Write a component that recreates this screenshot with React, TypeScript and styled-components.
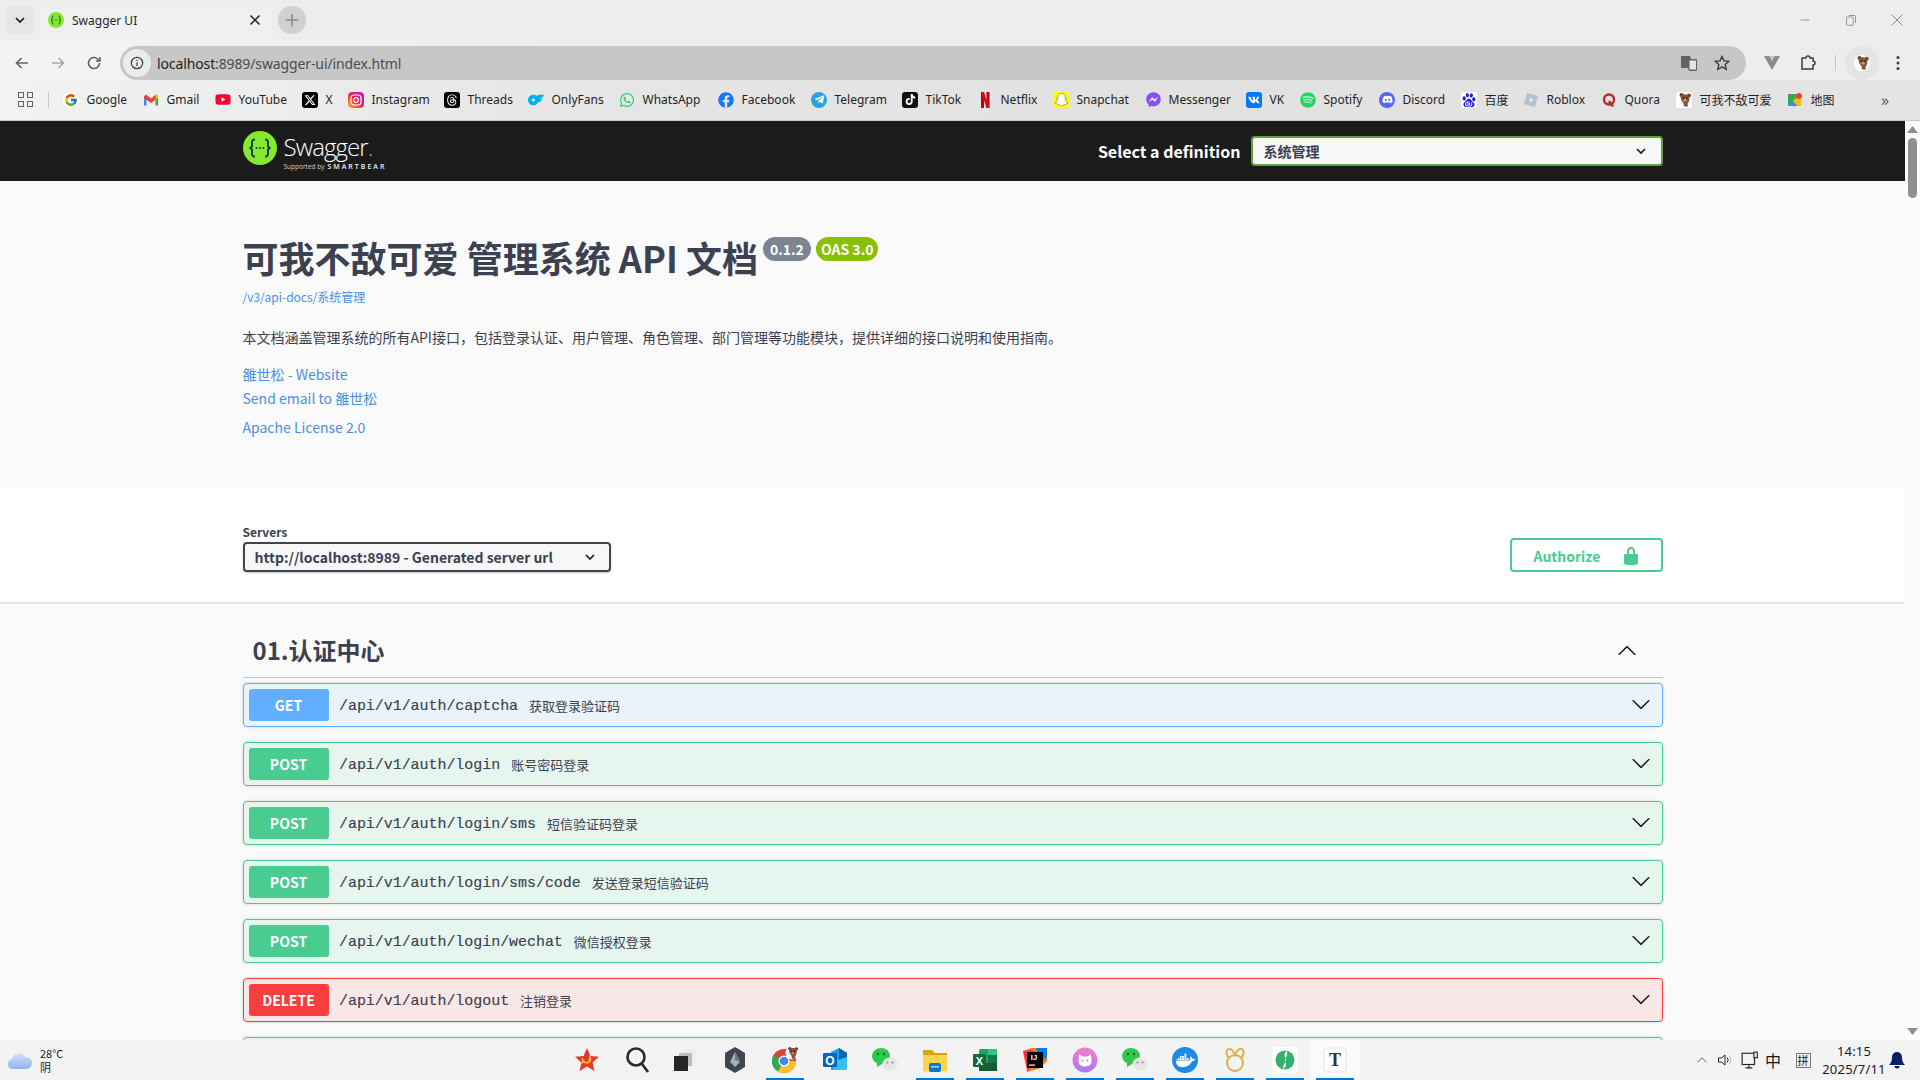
import React from 'react';
import styled, { createGlobalStyle } from 'styled-components';
import { FcGoogle } from 'react-icons/fc';
import {
  FaDiscord,
  FaDocker,
  FaFacebook,
  FaFacebookMessenger,
  FaSnapchatGhost,
  FaSpotify,
  FaTelegramPlane,
  FaTiktok,
  FaVk,
  FaWhatsapp,
  FaYoutube,
} from 'react-icons/fa';
import { FaThreads, FaXTwitter } from 'react-icons/fa6';
import { SiBaidu, SiOnlyfans } from 'react-icons/si';

const UI_FONT = `"Noto Sans", "Noto Sans CJK SC", sans-serif`;
const DOC_FONT = `"Noto Sans CJK SC", "Noto Sans", sans-serif`;

const GlobalStyle = createGlobalStyle`
  html, body {
    margin: 0;
    padding: 0;
    overflow: hidden;
    background: #fafafa;
  }
  * { box-sizing: border-box; }
`;

const Windowed = styled.div`
  width: 1920px;
  height: 1080px;
  display: flex;
  flex-direction: column;
  overflow: hidden;
  font-family: ${DOC_FONT};
  color: #3b4151;
`;

/* browser chrome */
const TabStrip = styled.div`
  height: 40px;
  flex: none;
  display: flex;
  align-items: center;
  padding-left: 6px;
  background: #ededed;
`;

const TabMenu = styled.div`
  width: 28px;
  height: 28px;
  border-radius: 8px;
  background: #e6e6e6;
  display: flex;
  align-items: center;
  justify-content: center;
`;

const Tab = styled.div`
  width: 232px;
  height: 34px;
  margin-top: 6px;
  margin-left: 6px;
  padding: 0 11px 6px 8px;
  border-radius: 10px 10px 0 0;
  background: #f0f0f0;
  display: flex;
  align-items: center;
  font: 12px ${UI_FONT};
  color: #262626;
`;

const TabTitle = styled.span`
  margin-left: 8px;
  flex: 1;
`;

const NewTab = styled.div`
  width: 28px;
  height: 28px;
  margin-left: 6px;
  border-radius: 50%;
  background: #d0d0d0;
  display: flex;
  align-items: center;
  justify-content: center;
`;

const WindowControls = styled.div`
  margin-left: auto;
  display: flex;
  align-items: center;
`;

const WindowButton = styled.div`
  width: 46px;
  height: 40px;
  display: flex;
  align-items: center;
  justify-content: center;
`;

const Toolbar = styled.div`
  height: 40px;
  flex: none;
  padding-top: 6px;
  display: flex;
  align-items: flex-start;
  background: linear-gradient(90deg, #f4f4f4 0%, #ececec 35%, #ededed 100%);
`;

const NavButton = styled.div`
  width: 36px;
  height: 34px;
  flex: none;
  display: flex;
  align-items: center;
  justify-content: center;
`;

const NavGroup = styled.div`
  width: 120px;
  flex: none;
  padding-left: 4px;
  display: flex;
`;

const UrlPill = styled.div`
  width: 1626px;
  height: 34px;
  flex: none;
  border-radius: 17px;
  background: #c7c7c7;
  display: flex;
  align-items: center;
  padding: 0 8px 0 3px;
`;

const SiteInfo = styled.div`
  width: 28px;
  height: 28px;
  border-radius: 50%;
  background: #ececec;
  display: flex;
  align-items: center;
  justify-content: center;
`;

const UrlText = styled.div`
  margin-left: 6px;
  flex: 1;
  font: 14px ${UI_FONT};
  letter-spacing: -0.12px;
  color: #4c4c4c;
`;

const UrlHost = styled.span`
  color: #1f1f1f;
`;

const PillAction = styled.div`
  width: 33px;
  display: flex;
  justify-content: center;
`;

const ToolActions = styled.div`
  display: flex;
  align-items: center;
  height: 34px;
  margin-left: 8px;
`;

const ToolAction = styled.div<{ $w: number }>`
  width: ${p => p.$w}px;
  display: flex;
  justify-content: center;
  align-items: center;
`;

const ToolSeparator = styled.div`
  width: 1px;
  height: 16px;
  background: #c4c4c4;
`;

const Avatar = styled.div`
  width: 34px;
  height: 34px;
  border-radius: 50%;
  background: #e4e4e4;
  display: flex;
  align-items: center;
  justify-content: center;
`;

const BookmarkBar = styled.div`
  height: 41px;
  flex: none;
  display: flex;
  align-items: center;
  padding-left: 64px;
  padding-bottom: 1px;
  border-bottom: 1px solid #c9c9c9;
  background: linear-gradient(90deg, #f2f2f2 0%, #e6e6e6 30%, #e1e1e1 60%, #e4e4e4 100%);
`;

const AppsButton = styled.div`
  width: 16px;
  height: 16px;
  margin-left: -46px;
  margin-right: 14px;
  flex: none;
  display: grid;
  grid-template-columns: 6px 6px;
  grid-template-rows: 6px 6px;
  gap: 3px;
`;

const AppsCell = styled.span`
  border: 1.5px solid #5f6368;
`;

const BarSeparator = styled.div`
  width: 1px;
  height: 16px;
  margin-right: 14px;
  flex: none;
  background: #c6c6c6;
`;

const Bookmark = styled.div<{ $w: number }>`
  width: ${p => p.$w}px;
  flex: none;
  display: flex;
  align-items: center;
  gap: 7.5px;
  font: 12px ${UI_FONT};
  color: #1f1f1f;
  white-space: nowrap;
`;

const Favicon = styled.span<{ $bg?: string; $fg?: string; $round?: boolean }>`
  width: 16px;
  height: 16px;
  flex: none;
  display: flex;
  align-items: center;
  justify-content: center;
  background: ${p => p.$bg || 'transparent'};
  color: ${p => p.$fg || '#fff'};
  border-radius: ${p => (p.$round ? '50%' : '3px')};
  overflow: hidden;
`;

const MoreBookmarks = styled.span`
  margin-left: 54px;
  font: 16px ${UI_FONT};
  color: #5f6368;
`;

/* swagger page */
const Viewport = styled.div`
  flex: 1;
  min-height: 0;
  display: flex;
`;

const Page = styled.div`
  flex: 1;
  min-width: 0;
  overflow: hidden;
  background: #fafafa;
`;

const Wrapper = styled.div`
  max-width: 1460px;
  margin: 0 auto;
  padding: 0 20px;
`;

const Topbar = styled.div`
  height: 60px;
  background: #1b1b1b;
`;

const TopbarInner = styled(Wrapper)`
  height: 60px;
  display: flex;
  align-items: center;
  justify-content: space-between;
`;

const Logo = styled.div`
  height: 60px;
  padding-top: 10px;
  display: flex;
  align-items: flex-start;
  gap: 7px;
  color: #fff;
`;

const LogoText = styled.div`
  margin-top: 3px;
  display: flex;
  flex-direction: column;
  font-family: "Open Sans", sans-serif;
`;

const LogoName = styled.div`
  font-size: 24px;
  font-weight: 300;
  line-height: 26px;
  letter-spacing: -0.9px;
`;

const LogoDot = styled.span`
  color: #9a9a9a;
`;

const LogoSub = styled.div`
  margin-top: 2px;
  font-size: 6.5px;
  line-height: 10px;
  white-space: nowrap;
  color: #cfcfcf;
`;

const LogoBrand = styled.span`
  margin-left: 3px;
  font-size: 7px;
  font-weight: 600;
  letter-spacing: 2px;
  color: #f2f2f2;
`;

const DefinitionForm = styled.div`
  display: flex;
  align-items: center;
  gap: 10px;
`;

const DefinitionLabel = styled.span`
  font-size: 16px;
  font-weight: 700;
  color: #fff;
`;

const DefinitionSelect = styled.div`
  width: 412px;
  height: 30px;
  padding: 0 15px 0 11px;
  border: 2px solid #62a03f;
  border-radius: 4px;
  background: #f7f7f7;
  display: flex;
  align-items: center;
  justify-content: space-between;
  font-size: 14px;
  font-weight: 700;
  color: #3b4151;
`;

const Info = styled(Wrapper)`
  padding-top: 50px;
  padding-bottom: 51px;
`;

const TitleRow = styled.div`
  display: flex;
  align-items: flex-start;
  height: 54px;
`;

const Title = styled.h2`
  margin: 0;
  font-size: 36px;
  line-height: 53px;
  font-weight: 700;
  color: #3b4151;
`;

const Badge = styled.span<{ $bg: string; $pad: number }>`
  height: 24px;
  margin-top: 6px;
  margin-left: 5px;
  padding: 0 ${p => p.$pad}px;
  border-radius: 12px;
  background: ${p => p.$bg};
  color: #fff;
  font-size: 14px;
  font-weight: 700;
  line-height: 24px;
`;

const DocUrl = styled.div`
  margin-top: 4px;
  font-size: 12px;
  line-height: 16px;
  color: #4990e2;
`;

const Description = styled.p`
  margin: 22px 0 0;
  font-size: 14px;
  line-height: 20px;
  color: #3b4151;
`;

const InfoLink = styled.div<{ $gap: number }>`
  margin-top: ${p => p.$gap}px;
  font-size: 14px;
  line-height: 20px;
  color: #4990e2;
`;

const SchemeBar = styled.div`
  height: 114px;
  background: #fff;
  box-shadow: 0 1px 2px 0 rgba(0, 0, 0, 0.15);
`;

const SchemeInner = styled(Wrapper)`
  height: 114px;
  padding-bottom: 30px;
  display: flex;
  align-items: flex-end;
  justify-content: space-between;
`;

const ServerLabel = styled.div`
  font-size: 12px;
  font-weight: 700;
  line-height: 16px;
  margin-bottom: 2px;
`;

const ServerSelect = styled.div`
  width: 368px;
  height: 30px;
  padding: 0 14px 0 10px;
  border: 2px solid #41444e;
  border-radius: 4px;
  background: #f7f7f7;
  box-shadow: 0 1px 2px 0 rgba(0, 0, 0, 0.25);
  display: flex;
  align-items: center;
  justify-content: space-between;
  font-size: 14px;
  font-weight: 700;
`;

const AuthorizeButton = styled.div`
  width: 153px;
  height: 34px;
  padding-left: 22px;
  padding-top: 1px;
  border: 2px solid #49cc90;
  border-radius: 4px;
  display: flex;
  align-items: center;
  gap: 21px;
  font-size: 14px;
  font-weight: 700;
  color: #49cc90;
`;

const Tag = styled(Wrapper)`
  padding-top: 25px;
`;

const TagHeader = styled.div`
  height: 51px;
  padding: 0 26px 2px 10px;
  margin-bottom: 5px;
  border-bottom: 1px solid rgba(59, 65, 81, 0.3);
  display: flex;
  align-items: center;
  justify-content: space-between;
`;

const TagTitle = styled.h3`
  margin: -2px 0 0;
  font-size: 24px;
  line-height: 46px;
  font-weight: 700;
  color: #3b4151;
`;

const METHOD_COLORS: Record<string, { main: string; tint: string }> = {
  GET: { main: '#61affe', tint: 'rgba(97, 175, 254, 0.1)' },
  POST: { main: '#49cc90', tint: 'rgba(73, 204, 144, 0.1)' },
  DELETE: { main: '#f93e3e', tint: 'rgba(249, 62, 62, 0.1)' },
};

const Operation = styled.div<{ $method: string }>`
  height: 44px;
  margin-bottom: 15px;
  padding: 5px 11px 5px 5px;
  border: 1px solid ${p => METHOD_COLORS[p.$method].main};
  border-radius: 4px;
  background: ${p => METHOD_COLORS[p.$method].tint};
  box-shadow: 0 0 3px rgba(0, 0, 0, 0.19);
  display: flex;
  align-items: center;
`;

const MethodBadge = styled.span<{ $method: string }>`
  width: 80px;
  height: 32px;
  flex: none;
  border-radius: 3px;
  background: ${p => METHOD_COLORS[p.$method].main};
  color: #fff;
  font-size: 14px;
  font-weight: 700;
  line-height: 32px;
  text-align: center;
`;

const OperationPath = styled.span`
  margin-left: 10.5px;
  padding-top: 2px;
  font-family: "Liberation Mono", monospace;
  font-size: 15px;
  letter-spacing: -0.05px;
  color: #3b4151;
  -webkit-text-stroke: 0.15px #3b4151;
`;

const OperationSummary = styled.span`
  margin-left: 11px;
  flex: 1;
  font-size: 13px;
  color: #3b4151;
`;

const RowChevron = styled.span`
  height: 20px;
  margin-top: -2px;
`;

const ScrollTrack = styled.div`
  width: 15px;
  flex: none;
  display: flex;
  flex-direction: column;
  align-items: center;
  background: #fbfbfb;
`;

const ScrollArrow = styled.div`
  height: 17px;
  flex: none;
  display: flex;
  align-items: center;
  justify-content: center;
`;

const ScrollThumb = styled.div`
  width: 9px;
  height: 60px;
  border-radius: 5px;
  background: #8f8f8f;
`;

const ScrollSpacer = styled.div`
  flex: 1;
`;

/* taskbar */
const Taskbar = styled.div`
  height: 40px;
  flex: none;
  display: grid;
  grid-template-columns: 560px 1fr auto;
  background: #f3f3f3;
  font-family: ${UI_FONT};
  color: #1a1a1a;
`;

const Weather = styled.div`
  display: flex;
  align-items: center;
  padding-left: 7px;
  gap: 7px;
`;

const WeatherText = styled.div`
  font: 11px/14px ${DOC_FONT};
`;

const TaskIcons = styled.div`
  display: flex;
`;

const TaskItem = styled.div<{ $running?: boolean; $active?: boolean; $dx?: number }>`
  position: relative;
  width: 50px;
  height: 40px;
  padding-left: ${p => p.$dx || 0}px;
  display: flex;
  align-items: center;
  justify-content: center;
  background: ${p => (p.$active ? '#fbfbfb' : 'transparent')};
  border-radius: 4px;

  &::after {
    content: '';
    display: ${p => (p.$running ? 'block' : 'none')};
    position: absolute;
    left: 6px;
    right: 6px;
    bottom: 0;
    height: 2px;
    background: #0078d4;
  }
`;

const TaskBadge = styled.span<{ $bg: string }>`
  width: 26px;
  height: 26px;
  border-radius: 50%;
  background: ${p => p.$bg};
  display: flex;
  align-items: center;
  justify-content: center;
`;

const Tray = styled.div`
  display: flex;
  align-items: center;
  padding-right: 15px;
`;

const TrayIcon = styled.div<{ $w: number }>`
  width: ${p => p.$w}px;
  display: flex;
  justify-content: center;
  align-items: center;
`;

const ImeText = styled.span`
  font: 16px ${DOC_FONT};
`;

const ImeBox = styled.span`
  width: 15px;
  height: 15px;
  border: 1px solid #777;
  display: flex;
  align-items: center;
  justify-content: center;
  font: 11px ${DOC_FONT};
`;

const Clock = styled.div`
  width: 70px;
  text-align: center;
  font-size: 13px;
  line-height: 18px;
  letter-spacing: 0.2px;
  white-space: nowrap;
`;

/* drawings */
const Chevron = ({ up = false }: { up?: boolean }) => (
  <svg width="20" height="20" viewBox="0 0 20 20" fill="#1a1a1a" style={up ? { transform: 'rotate(180deg)' } : undefined}>
    <path d="M17.418 6.109c.272-.268.709-.268.979 0s.271.701 0 .969l-7.908 7.83c-.27.268-.707.268-.979 0l-7.908-7.83c-.27-.268-.27-.701 0-.969.271-.268.709-.268.979 0L10 13.25l7.418-7.141z" />
  </svg>
);

const SmallChevron = ({ color = '#1a1a1a' }: { color?: string }) => (
  <svg width="10" height="6" viewBox="0 0 10 6" fill="none" stroke={color} strokeWidth="1.7">
    <path d="M1 1l4 4 4-4" />
  </svg>
);

const SwaggerMark = ({ size }: { size: number }) => (
  <svg width={size} height={size} viewBox="0 0 34 34">
    <circle cx="17" cy="17" r="17" fill="#85ea2d" />
    <g fill="none" stroke="#173647" strokeWidth="1.9">
      <path d="M12 8.5c-3 0-3 1.5-3 4v2c0 1.6-1 2.5-2.5 2.5 1.5 0 2.5.9 2.5 2.5v2c0 2.5 0 4 3 4" />
      <path d="M22 8.5c3 0 3 1.5 3 4v2c0 1.6 1 2.5 2.5 2.5-1.5 0-2.5.9-2.5 2.5v2c0 2.5 0 4-3 4" />
    </g>
    <g fill="#173647">
      <circle cx="13.5" cy="17" r="1" />
      <circle cx="17" cy="17" r="1" />
      <circle cx="20.5" cy="17" r="1" />
    </g>
  </svg>
);

const LockIcon = () => (
  <svg width="20" height="20" viewBox="0 0 20 20" fill="#49cc90">
    <path d="M15.8 8H14V5.6C14 2.703 12.665 1 10 1 7.334 1 6 2.703 6 5.6V8H4c-.553 0-1 .646-1 1.199V17c0 .549.428 1.139.951 1.307l1.197.387C5.672 18.861 6.55 19 7.1 19h5.8c.549 0 1.428-.139 1.951-.307l1.196-.387c.524-.167.953-.757.953-1.306V9.199C17 8.646 16.352 8 15.8 8zM12 8H8V5.199C8 3.754 8.797 3 10 3c1.203 0 2 .754 2 2.199V8z" />
  </svg>
);

const Stroke = ({ children, size = 16, color = '#5f6368', width = 1.6 }: { children: React.ReactNode; size?: number; color?: string; width?: number }) => (
  <svg width={size} height={size} viewBox="0 0 16 16" fill="none" stroke={color} strokeWidth={width}>
    {children}
  </svg>
);

const BearFace = ({ size }: { size: number }) => (
  <svg width={size} height={size} viewBox="0 0 16 16">
    <circle cx="5.5" cy="3" r="2" fill="#6d4230" />
    <circle cx="13" cy="3.5" r="2" fill="#6d4230" />
    <path d="M5 4c2-2.5 7-2 8 .5 1 3 0 6-1.5 7l.5 3H8l-.5-3.5C6 10 4 6.5 5 4z" fill="#87533a" />
    <circle cx="7.5" cy="6" r=".8" fill="#1c1008" />
    <circle cx="11" cy="6" r=".8" fill="#1c1008" />
    <ellipse cx="9" cy="8.2" rx="1.7" ry="1.2" fill="#c89a78" />
  </svg>
);

const Gmail = () => (
  <svg width="16" height="16" viewBox="0 0 16 16">
    <path d="M1 3.5v10h2.5V7.5z" fill="#4285f4" />
    <path d="M15 3.5v10h-2.5V7.5z" fill="#34a853" />
    <path d="M1 4.5L3 2.5 8 6.5l5-4 2 2V6L8 11 1 6z" fill="#ea4335" />
    <path d="M12.5 2.8L15 2.5V6l-2.5 1.8z" fill="#fbbc04" />
  </svg>
);

const Instagram = () => (
  <svg width="16" height="16" viewBox="0 0 16 16">
    <defs>
      <linearGradient id="ig" x1="0" y1="1" x2="1" y2="0">
        <stop offset="0" stopColor="#fdb42c" />
        <stop offset=".5" stopColor="#f0204f" />
        <stop offset="1" stopColor="#a326d0" />
      </linearGradient>
    </defs>
    <rect width="16" height="16" rx="4" fill="url(#ig)" />
    <rect x="3" y="3" width="10" height="10" rx="3" fill="none" stroke="#fff" strokeWidth="1.2" />
    <circle cx="8" cy="8" r="2.3" fill="none" stroke="#fff" strokeWidth="1.2" />
  </svg>
);

const Netflix = () => (
  <svg width="12" height="16" viewBox="0 0 12 16">
    <path d="M2 0h3v16H2z" fill="#b1060f" />
    <path d="M7.5 0h3v16h-3z" fill="#b1060f" />
    <path d="M2 0h3l5.5 16h-3z" fill="#e50914" />
  </svg>
);

const Roblox = () => (
  <svg width="16" height="16" viewBox="0 0 16 16">
    <path d="M4 1l11 3-3 11L1 12z" fill="#b7c2cc" />
    <path d="M7 6l3 1-1 3-3-1z" fill="#e4e9ee" />
  </svg>
);

const Quora = () => (
  <svg width="16" height="16" viewBox="0 0 16 16" fill="none" stroke="#b92b27" strokeWidth="2.4">
    <circle cx="8" cy="7.5" r="5" />
    <path d="M8 9l4 5.5" />
  </svg>
);

const MapPin = () => (
  <svg width="16" height="16" viewBox="0 0 16 16">
    <path d="M1 2h9v6l-9 6z" fill="#34a853" />
    <path d="M1 14l5-5 5 5z" fill="#4285f4" />
    <path d="M6 9l5-5 3 3v7h-3z" fill="#fbbc04" />
    <circle cx="12" cy="4" r="3" fill="#ea4335" />
  </svg>
);

const WechatIcon = () => (
  <svg width="28" height="26" viewBox="0 0 28 26">
    <ellipse cx="10" cy="9" rx="9" ry="8" fill="#2dc84d" />
    <path d="M6 15l0 5 5-3z" fill="#2dc84d" />
    <circle cx="7" cy="7" r="1.2" fill="#14692a" />
    <circle cx="13" cy="7" r="1.2" fill="#14692a" />
    <ellipse cx="19" cy="17" rx="7.5" ry="6.5" fill="#e6e6e6" />
    <circle cx="16.5" cy="15.5" r="1" fill="#888" />
    <circle cx="21.5" cy="15.5" r="1" fill="#888" />
  </svg>
);

const TASK_ICONS: { key: string; running?: boolean; active?: boolean; dx?: number; icon: React.ReactNode }[] = [
  {
    key: 'star',
    dx: 4,
    icon: (
      <svg width="26" height="26" viewBox="0 0 26 26">
        <path d="M13 1l3.5 8 8.5.8-6.4 5.7 1.900 8.500L13 19.500 5.500 24l1.900-8.500L1 9.800 9.500 9z" fill="#e8392e" />
        <path d="M15 8c3 2 3 6 0 8-2 1.200-4 .6-5.500-.5L8 17l-1-1 1.500-1.500c-1-1.500-1-3 0-4 .3 2 2 4 4 4.500 1.800.2 3-2.500 2.500-7z" fill="#f7c32e" />
      </svg>
    ),
  },
  {
    key: 'search',
    dx: 6,
    icon: (
      <svg width="26" height="28" viewBox="0 0 26 28" fill="none" stroke="#2a2a2a" strokeWidth="2.6">
        <circle cx="11" cy="11" r="8.5" />
        <path d="M17 18l6 8" />
      </svg>
    ),
  },
  {
    key: 'files',
    icon: (
      <svg width="24" height="24" viewBox="0 0 24 24">
        <rect x="9" y="1" width="14" height="14" fill="#ececec" />
        <rect x="6" y="5" width="13" height="13" fill="#bcbcbc" />
        <rect x="1" y="8" width="14" height="15" fill="#262626" />
      </svg>
    ),
  },
  {
    key: 'hex',
    icon: (
      <svg width="24" height="28" viewBox="0 0 24 28">
        <path d="M12 1l10 6v14l-10 6-10-6V7z" fill="#3f4650" />
        <path d="M12 6l5 10-5 5-5-5z" fill="#a9afb6" />
        <path d="M12 6l5 10-5-2z" fill="#6f767e" />
      </svg>
    ),
  },
  {
    key: 'chrome',
    running: true,
    icon: (
      <svg width="28" height="28" viewBox="0 0 28 28">
        <circle cx="13" cy="15" r="12" fill="#e34133" />
        <path d="M13 15L2.6 9A12 12 0 0 0 7 25.4z" fill="#2fa84f" />
        <path d="M13 15h12a12 12 0 0 1-18 10.4z" fill="#fbc02d" />
        <circle cx="13" cy="15" r="5.5" fill="#fff" />
        <circle cx="13" cy="15" r="4.3" fill="#4285f4" />
        <circle cx="21" cy="7" r="6.5" fill="#fff" />
        <g transform="translate(14 0)"><BearFace size={14} /></g>
      </svg>
    ),
  },
  {
    key: 'outlook',
    icon: (
      <svg width="26" height="26" viewBox="0 0 26 26">
        <path d="M9 5l8-4 8 5v14a3 3 0 0 1-3 3H9z" fill="#1aa1e8" />
        <path d="M17 1l8 5v5l-8 4z" fill="#0f64b8" />
        <path d="M13 14l12-4v10a3 3 0 0 1-3 3H11z" fill="#33c3f2" />
        <rect x="1" y="6" width="14" height="14" rx="1" fill="#0a64c4" />
        <text x="8" y="17.5" fontFamily="Liberation Sans, sans-serif" fontWeight="700" fontSize="12" fill="#fff" textAnchor="middle">O</text>
      </svg>
    ),
  },
  { key: 'wechat', icon: <WechatIcon /> },
  {
    key: 'folder',
    running: true,
    icon: (
      <svg width="26" height="24" viewBox="0 0 26 24">
        <path d="M1 2h9l3 3h12v4H1z" fill="#d9a313" />
        <path d="M1 7h24v15a1.5 1.5 0 0 1-1.5 1.5h-21A1.5 1.5 0 0 1 1 22z" fill="#fcd34d" />
        <rect x="7" y="15" width="12" height="9" rx="2" fill="#0a78c8" />
        <rect x="9" y="18" width="8" height="1.5" fill="#9fd6f5" />
      </svg>
    ),
  },
  {
    key: 'excel',
    running: true,
    icon: (
      <svg width="26" height="24" viewBox="0 0 26 24">
        <rect x="7" y="1" width="18" height="22" rx="1.5" fill="#21a366" />
        <rect x="16" y="1" width="9" height="6" fill="#33c481" />
        <rect x="16" y="7" width="9" height="8" fill="#107c41" />
        <rect x="7" y="15" width="18" height="8" fill="#185c37" />
        <rect x="1" y="6" width="13" height="13" rx="1" fill="#0e6b38" />
        <text x="7.5" y="16.5" fontFamily="Liberation Sans, sans-serif" fontWeight="700" fontSize="11" fill="#fff" textAnchor="middle">X</text>
      </svg>
    ),
  },
  {
    key: 'idea',
    running: true,
    icon: (
      <svg width="26" height="26" viewBox="0 0 26 26">
        <path d="M1 4l8-3 16 0v13l-6 7-14 4z" fill="#fc801d" />
        <path d="M1 4l10-1-5 22z" fill="#fe2857" />
        <path d="M14 1h11v9l-8 6z" fill="#087cfa" />
        <rect x="5" y="5" width="16" height="16" fill="#000" />
        <text x="12" y="13" fontFamily="Liberation Sans, sans-serif" fontWeight="700" fontSize="7.5" fill="#fff" textAnchor="middle">IJ</text>
        <rect x="7" y="17.5" width="6" height="1.2" fill="#fff" />
      </svg>
    ),
  },
  {
    key: 'cat',
    running: true,
    icon: (
      <svg width="26" height="26" viewBox="0 0 26 26">
        <defs>
          <linearGradient id="cat" x1="0" y1="0" x2="0" y2="1">
            <stop offset="0" stopColor="#f77fc6" />
            <stop offset="1" stopColor="#a678f5" />
          </linearGradient>
        </defs>
        <circle cx="13" cy="13" r="12.5" fill="url(#cat)" />
        <path d="M7 7l3.5 2.5h5L19 7l.5 8c-.5 3-3.5 4.5-6.5 4.5S7 18 6.5 15z" fill="#fff" />
        <circle cx="10.5" cy="13.5" r="1" fill="#b488e8" />
        <circle cx="15.5" cy="13.5" r="1" fill="#b488e8" />
      </svg>
    ),
  },
  { key: 'wechat2', running: true, icon: <WechatIcon /> },
  {
    key: 'docker',
    running: true,
    icon: (
      <TaskBadge $bg="#1d8ae5">
        <FaDocker size={19} color="#fff" />
      </TaskBadge>
    ),
  },
  {
    key: 'navicat',
    running: true,
    icon: (
      <svg width="26" height="26" viewBox="0 0 26 26" fill="none" stroke="#d9b44a" strokeWidth="2">
        <ellipse cx="13" cy="16" rx="8" ry="8" />
        <path d="M7 11C3 7 4 1 8 2c3 .6 4 4 5 6 1-2 2-5.4 5-6 4-1 5 5 1 9" />
      </svg>
    ),
  },
  {
    key: 'green',
    running: true,
    icon: (
      <svg width="26" height="26" viewBox="0 0 26 26">
        <rect width="26" height="26" rx="5" fill="#fff" />
        <circle cx="13" cy="13" r="9.5" fill="#31b26b" />
        <path d="M15 4c-5 3-1 7-1 9s-3 4-3 9c5-3 2-7 2-9s3-4 2-9z" fill="#fff" />
      </svg>
    ),
  },
  {
    key: 'typora',
    running: true,
    active: true,
    icon: (
      <svg width="24" height="26" viewBox="0 0 24 26">
        <rect x="1" y="1" width="22" height="24" rx="3" fill="#fff" stroke="#e4e4e4" />
        <text x="12" y="19" fontFamily="Liberation Serif, serif" fontWeight="700" fontSize="18" fill="#333" textAnchor="middle">T</text>
      </svg>
    ),
  },
];

const BOOKMARKS: { label: string; w: number; icon: React.ReactNode }[] = [
  { label: 'Google', w: 80, icon: <Favicon $bg="#fff" $round><FcGoogle size={14} /></Favicon> },
  { label: 'Gmail', w: 72, icon: <Favicon><Gmail /></Favicon> },
  { label: 'YouTube', w: 87, icon: <Favicon $fg="#ff0033"><FaYoutube size={17} /></Favicon> },
  { label: 'X', w: 46, icon: <Favicon $bg="#000"><FaXTwitter size={12} /></Favicon> },
  { label: 'Instagram', w: 96, icon: <Favicon><Instagram /></Favicon> },
  { label: 'Threads', w: 84, icon: <Favicon $bg="#000"><FaThreads size={12} /></Favicon> },
  { label: 'OnlyFans', w: 91, icon: <Favicon $fg="#00aff0"><SiOnlyfans size={16} /></Favicon> },
  { label: 'WhatsApp', w: 99, icon: <Favicon $fg="#25d366"><FaWhatsapp size={16} /></Favicon> },
  { label: 'Facebook', w: 93, icon: <Favicon $fg="#1877f2"><FaFacebook size={16} /></Favicon> },
  { label: 'Telegram', w: 91, icon: <Favicon $bg="#2aa3df" $round><FaTelegramPlane size={11} /></Favicon> },
  { label: 'TikTok', w: 75, icon: <Favicon $bg="#111"><FaTiktok size={11} /></Favicon> },
  { label: 'Netflix', w: 76, icon: <Favicon><Netflix /></Favicon> },
  { label: 'Snapchat', w: 92, icon: <Favicon $bg="#fffc00" $fg="#fff"><FaSnapchatGhost size={13} style={{ stroke: '#222', strokeWidth: 14 }} /></Favicon> },
  { label: 'Messenger', w: 101, icon: <Favicon $fg="#8a4ff5"><FaFacebookMessenger size={15} /></Favicon> },
  { label: 'VK', w: 54, icon: <Favicon $bg="#0077ff"><FaVk size={12} /></Favicon> },
  { label: 'Spotify', w: 79, icon: <Favicon $fg="#1ed760"><FaSpotify size={16} /></Favicon> },
  { label: 'Discord', w: 82, icon: <Favicon $bg="#5865f2" $round><FaDiscord size={11} /></Favicon> },
  { label: '百度', w: 62, icon: <Favicon $bg="#fff" $fg="#2319dc"><SiBaidu size={14} /></Favicon> },
  { label: 'Roblox', w: 78, icon: <Favicon><Roblox /></Favicon> },
  { label: 'Quora', w: 75, icon: <Favicon><Quora /></Favicon> },
  { label: '可我不敌可爱', w: 111, icon: <Favicon $bg="#fff"><BearFace size={16} /></Favicon> },
  { label: '地图', w: 40, icon: <Favicon><MapPin /></Favicon> },
];

const OPERATIONS = [
  { method: 'GET', path: '/api/v1/auth/captcha', summary: '获取登录验证码' },
  { method: 'POST', path: '/api/v1/auth/login', summary: '账号密码登录' },
  { method: 'POST', path: '/api/v1/auth/login/sms', summary: '短信验证码登录' },
  { method: 'POST', path: '/api/v1/auth/login/sms/code', summary: '发送登录短信验证码' },
  { method: 'POST', path: '/api/v1/auth/login/wechat', summary: '微信授权登录' },
  { method: 'DELETE', path: '/api/v1/auth/logout', summary: '注销登录' },
];

const App = () => {
  return (
    <Windowed>
      <GlobalStyle />
      <TabStrip>
        <TabMenu><SmallChevron /></TabMenu>
        <Tab>
          <SwaggerMark size={16} />
          <TabTitle>Swagger UI</TabTitle>
          <Stroke size={12} color="#1f1f1f" width={2}><path d="M2 2l12 12M14 2L2 14" /></Stroke>
        </Tab>
        <NewTab>
          <Stroke size={14} color="#8a8a8a" width={1.8}><path d="M8 1v14M1 8h14" /></Stroke>
        </NewTab>
        <WindowControls>
          <WindowButton><Stroke size={12} color="#777" width={1}><path d="M2 8h12" /></Stroke></WindowButton>
          <WindowButton>
            <Stroke size={12} color="#777" width={1}>
              <rect x="2" y="4" width="9" height="11" rx="1.5" />
              <path d="M5 2h8a1 1 0 0 1 1 1v9" />
            </Stroke>
          </WindowButton>
          <WindowButton><Stroke size={14} color="#777" width={1}><path d="M2 2l12 12M14 2L2 14" /></Stroke></WindowButton>
        </WindowControls>
      </TabStrip>

      <Toolbar>
        <NavGroup>
          <NavButton>
            <Stroke><path d="M14 8H2.5M7.5 3L2.5 8l5 5" /></Stroke>
          </NavButton>
          <NavButton>
            <Stroke color="#a6a6a6"><path d="M2 8h11.5M8.5 3l5 5-5 5" /></Stroke>
          </NavButton>
          <NavButton>
            <Stroke><path d="M13.5 8a5.5 5.5 0 1 1-1.7-4L14 6M14 2v4h-4" /></Stroke>
          </NavButton>
        </NavGroup>
        <UrlPill>
          <SiteInfo>
            <Stroke size={14} color="#3c3c3c" width={1.4}>
              <circle cx="8" cy="8" r="6.5" />
              <path d="M8 7v4.5M8 4.2v1.4" />
            </Stroke>
          </SiteInfo>
          <UrlText>
            <UrlHost>localhost</UrlHost>:8989/swagger-ui/index.html
          </UrlText>
          <PillAction>
            <svg width="18" height="18" viewBox="0 0 18 18">
              <path d="M1 2h9l1 3h5a1 1 0 0 1 1 1v10a1 1 0 0 1-1 1H9l-1-3H2a1 1 0 0 1-1-1z" fill="#5f6368" />
              <rect x="9.5" y="6.5" width="6.5" height="9" fill="#e6e6e6" />
            </svg>
          </PillAction>
          <PillAction>
            <Stroke size={16} color="#3c3c3c" width={1.4}>
              <path d="M8 1.5l2 4.4 4.7.5-3.5 3.2 1 4.7L8 11.900l-4.200 2.400 1-4.700L1.300 6.400 6 5.900z" />
            </Stroke>
          </PillAction>
        </UrlPill>
        <ToolActions>
          <ToolAction $w={36}>
            <svg width="16" height="16" viewBox="0 0 16 16">
              <path d="M0 1h16L8 15z" fill="#8a8a8a" />
              <path d="M5 1h6L8 6z" fill="#c4c4c4" />
            </svg>
          </ToolAction>
          <ToolAction $w={36}>
            <Stroke size={16} color="#3c3c3c" width={1.5}>
              <path d="M2 3h4a2 2 0 0 1 4 0h3v3a2 2 0 0 1 0 4v4H2z" />
            </Stroke>
          </ToolAction>
          <ToolAction $w={18}><ToolSeparator /></ToolAction>
          <ToolAction $w={36}>
            <Avatar>
              <Favicon $bg="#fff" $round><BearFace size={16} /></Favicon>
            </Avatar>
          </ToolAction>
          <ToolAction $w={36}>
            <svg width="4" height="16" viewBox="0 0 4 16" fill="#3c3c3c">
              <circle cx="2" cy="2.5" r="1.5" />
              <circle cx="2" cy="8" r="1.5" />
              <circle cx="2" cy="13.5" r="1.5" />
            </svg>
          </ToolAction>
        </ToolActions>
      </Toolbar>

      <BookmarkBar>
        <AppsButton>
          <AppsCell /><AppsCell /><AppsCell /><AppsCell />
        </AppsButton>
        <BarSeparator />
        {BOOKMARKS.map(item => (
          <Bookmark key={item.label} $w={item.w}>
            {item.icon}
            <span>{item.label}</span>
          </Bookmark>
        ))}
        <MoreBookmarks>»</MoreBookmarks>
      </BookmarkBar>

      <Viewport>
        <Page>
          <Topbar>
            <TopbarInner>
              <Logo>
                <SwaggerMark size={34} />
                <LogoText>
                  <LogoName>Swagger<LogoDot>.</LogoDot></LogoName>
                  <LogoSub>Supported by<LogoBrand>SMARTBEAR</LogoBrand></LogoSub>
                </LogoText>
              </Logo>
              <DefinitionForm>
                <DefinitionLabel>Select a definition</DefinitionLabel>
                <DefinitionSelect>
                  系统管理
                  <SmallChevron />
                </DefinitionSelect>
              </DefinitionForm>
            </TopbarInner>
          </Topbar>

          <Info>
            <TitleRow>
              <Title>可我不敌可爱 管理系统 API 文档</Title>
              <Badge $bg="#7d8492" $pad={7}>0.1.2</Badge>
              <Badge $bg="#89bf04" $pad={5}>OAS 3.0</Badge>
            </TitleRow>
            <DocUrl>/v3/api-docs/系统管理</DocUrl>
            <Description>本文档涵盖管理系统的所有API接口，包括登录认证、用户管理、角色管理、部门管理等功能模块，提供详细的接口说明和使用指南。</Description>
            <InfoLink $gap={17}>雒世松 - Website</InfoLink>
            <InfoLink $gap={4}>Send email to 雒世松</InfoLink>
            <InfoLink $gap={9}>Apache License 2.0</InfoLink>
          </Info>

          <SchemeBar>
            <SchemeInner>
              <div>
                <ServerLabel>Servers</ServerLabel>
                <ServerSelect>
                  http://localhost:8989 - Generated server url
                  <SmallChevron />
                </ServerSelect>
              </div>
              <AuthorizeButton>
                Authorize
                <LockIcon />
              </AuthorizeButton>
            </SchemeInner>
          </SchemeBar>

          <Tag>
            <TagHeader>
              <TagTitle>01.认证中心</TagTitle>
              <Chevron up />
            </TagHeader>
            {OPERATIONS.map(op => (
              <Operation key={op.path} $method={op.method}>
                <MethodBadge $method={op.method}>{op.method}</MethodBadge>
                <OperationPath>{op.path}</OperationPath>
                <OperationSummary>{op.summary}</OperationSummary>
                <RowChevron><Chevron /></RowChevron>
              </Operation>
            ))}
            {/* next row only peeks out above the taskbar */}
            <Operation $method="POST" />
          </Tag>
        </Page>
        <ScrollTrack>
          <ScrollArrow>
            <svg width="11" height="7" viewBox="0 0 11 7" fill="#8f8f8f"><path d="M5.5 0L11 7H0z" /></svg>
          </ScrollArrow>
          <ScrollThumb />
          <ScrollSpacer />
          <ScrollArrow>
            <svg width="11" height="7" viewBox="0 0 11 7" fill="#8f8f8f"><path d="M5.5 7L11 0H0z" /></svg>
          </ScrollArrow>
        </ScrollTrack>
      </Viewport>

      <Taskbar>
        <Weather>
          <svg width="26" height="20" viewBox="0 0 26 20">
            <defs>
              <linearGradient id="cloud" x1="0" y1="0" x2="0" y2="1">
                <stop offset="0" stopColor="#cfe0f7" />
                <stop offset="1" stopColor="#8fb5ec" />
              </linearGradient>
            </defs>
            <path d="M6 19a5 5 0 0 1-1-9.900A7 7 0 0 1 18 7a6 6 0 0 1 2 12z" fill="url(#cloud)" />
          </svg>
          <WeatherText>
            28°C
            <br />
            阴
          </WeatherText>
        </Weather>
        <TaskIcons>
          {TASK_ICONS.map(item => (
            <TaskItem key={item.key} $running={item.running} $active={item.active} $dx={item.dx}>
              {item.icon}
            </TaskItem>
          ))}
        </TaskIcons>
        <Tray>
          <TrayIcon $w={14}><Stroke size={12} color="#555" width={1.2}><path d="M2 11l6-6 6 6" /></Stroke></TrayIcon>
          <TrayIcon $w={32}>
            <Stroke size={16} color="#222" width={1}>
              <path d="M1.5 6h3L8 3v10L4.5 10h-3z" />
              <path d="M10 5.5a3.5 3.5 0 0 1 0 5" />
              <path d="M12 3.5a6.5 6.5 0 0 1 0 9" stroke="#bbb" />
            </Stroke>
          </TrayIcon>
          <TrayIcon $w={18}>
            <Stroke size={18} color="#222" width={1}>
              <rect x="1" y="2" width="11" height="10" />
              <path d="M4 15h6M7 12v3" />
              <rect x="11.5" y="1" width="3" height="5" fill="#f3f3f3" />
            </Stroke>
          </TrayIcon>
          <TrayIcon $w={28}><ImeText>中</ImeText></TrayIcon>
          <TrayIcon $w={32}><ImeBox>拼</ImeBox></TrayIcon>
          <Clock>
            14:15
            <br />
            2025/7/11
          </Clock>
          <svg width="16" height="18" viewBox="0 0 16 18" fill="#0a1f66">
            <path d="M8 1a5 5 0 0 1 5 5c0 4 1 6 3 8H0c2-2 3-4 3-8a5 5 0 0 1 5-5z" />
            <path d="M5.5 15h5a2.5 2.5 0 0 1-5 0z" />
          </svg>
        </Tray>
      </Taskbar>
    </Windowed>
  );
};

export default App;
